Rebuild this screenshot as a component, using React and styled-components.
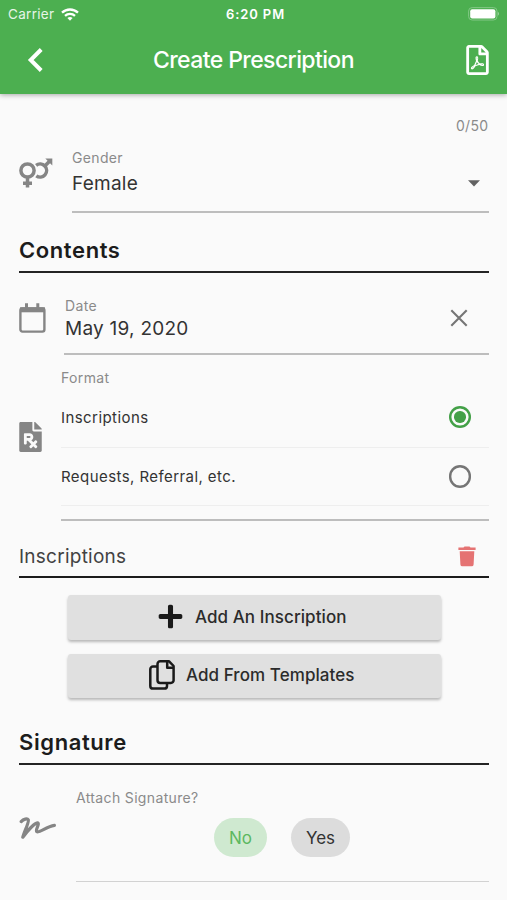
import { useState } from "react";
import styled, { createGlobalStyle } from "styled-components";
import { FaFilePrescription, FaPlus, FaRegFilePdf } from "react-icons/fa";

const GlobalStyle = createGlobalStyle`
  * {
    box-sizing: border-box;
  }

  body {
    margin: 0;
    background-color: #fafafa;
    font-family: Inter, "Liberation Sans", sans-serif;
    color: #333333;
  }

  button {
    font-family: inherit;
    border: none;
    padding: 0;
    cursor: pointer;
  }
`;

const Screen = styled.div`
  width: 507px;
  height: 900px;
  overflow: hidden;
  display: flex;
  flex-direction: column;
  background-color: #fafafa;
`;

const Header = styled.header`
  height: 94px;
  flex-shrink: 0;
  background-color: #4caf50;
  color: #ffffff;
  box-shadow: 0 1px 5px #00000055;
`;

const StatusBar = styled.div`
  height: 28px;
  padding: 0 8px 0 8px;
  display: grid;
  grid-template-columns: 1fr auto 1fr;
  align-items: center;
  font-size: 13.5px;
`;

const Carrier = styled.div`
  display: flex;
  align-items: center;
  gap: 7px;
  letter-spacing: 0.3px;
  color: #e6f5e7;
`;

const Clock = styled.div`
  padding-left: 4px;
  font-weight: 600;
  font-size: 13px;
  letter-spacing: 0.9px;
`;

const Battery = styled.div`
  display: flex;
  justify-content: flex-end;
`;

const NavBar = styled.div`
  height: 64px;
  padding: 0 18px 0 27px;
  display: grid;
  grid-template-columns: 126px 1fr auto;
  align-items: center;
`;

const Title = styled.h1`
  margin: 0;
  font-size: 23px;
  line-height: 28px;
  font-weight: 500;
  letter-spacing: -0.6px;
`;

const IconButton = styled.button`
  display: flex;
  background: none;
  color: inherit;
`;

const Form = styled.main`
  padding: 0 18.5px 0 19px;
  display: flex;
  flex-direction: column;
`;

const Counter = styled.div`
  height: 50px;
  padding-top: 23px;
  font-size: 14px;
  line-height: 17px;
  letter-spacing: 0.35px;
  text-align: right;
  color: #8a8a8a;
`;

const FieldRow = styled.div`
  height: ${(props) => props.$height}px;
  display: grid;
  grid-template-columns: ${(props) => props.$indent}px 1fr;
`;

const FieldIcon = styled.div`
  padding-top: ${(props) => props.$top}px;
  color: #858585;

  & > svg {
    display: block;
  }
`;

const Field = styled.div`
  display: flex;
  flex-direction: column;
  border-bottom: ${(props) => (props.$thin ? "1.5px solid #d2d2d2" : "2px solid #bdbdbd")};
`;

const Label = styled.div`
  margin-top: ${(props) => props.$top}px;
  font-size: 14px;
  line-height: 18px;
  letter-spacing: 0.35px;
  color: #8a8a8a;
`;

const ValueRow = styled.div`
  height: ${(props) => props.$height}px;
  padding-top: ${(props) => props.$top || 0}px;
  padding-right: ${(props) => props.$right}px;
  display: flex;
  align-items: center;
  justify-content: space-between;
`;

const Value = styled.div`
  font-size: 19px;
  line-height: 23px;
  letter-spacing: 0.25px;
  color: #333333;
`;

const DateText = styled.div`
  padding-left: 1px;
  display: flex;
  flex-direction: column;
  gap: 2px;
`;

const Heading = styled.h2`
  height: ${(props) => props.$height}px;
  margin: 0;
  padding-bottom: 7px;
  display: flex;
  align-items: flex-end;
  border-bottom: 2px solid #242424;
  font-size: 22px;
  line-height: 28px;
  font-weight: 600;
  letter-spacing: 0.6px;
  color: #1c1c1c;
`;

const SubHeading = styled.div`
  height: 57px;
  padding: 15px 13px 0 0;
  display: flex;
  align-items: center;
  justify-content: space-between;
  border-bottom: 2px solid #1c1c1c;
  font-size: 19px;
  letter-spacing: 0.25px;
  color: #424242;
`;

const Option = styled.button`
  height: ${(props) => props.$height}px;
  padding: 0 17.5px 0 0;
  display: flex;
  align-items: center;
  justify-content: space-between;
  background: none;
  border-bottom: 1px solid #eeeeee;
  font-size: 15px;
  letter-spacing: 0.43px;
  text-align: left;
  color: #333333;
`;

const Radio = styled.span`
  width: 22.5px;
  height: 22.5px;
  display: flex;
  align-items: center;
  justify-content: center;
  border-radius: 50%;
  box-shadow: inset 0 0 0 2.4px ${(props) => (props.$checked ? "#43a047" : "#757575")};

  &::after {
    content: "";
    width: 11.5px;
    height: 11.5px;
    border-radius: 50%;
    background-color: ${(props) => (props.$checked ? "#43a047" : "transparent")};
  }
`;

const Actions = styled.div`
  padding: 17px 47.5px 0 48.5px;
  display: flex;
  flex-direction: column;
  gap: 14px;
`;

const ActionButton = styled.button`
  height: 44.5px;
  padding: 0 5px 1px 0;
  display: flex;
  align-items: center;
  justify-content: center;
  gap: 11px;
  border-radius: 3px;
  background-color: #e0e0e0;
  box-shadow: 0 2px 3px #00000045;
  font-size: 17px;
  font-weight: 500;
  letter-spacing: 0.08px;
  color: #2b2b2b;

  & > svg {
    color: #1a1a1a;
  }
`;

const Chips = styled.div`
  margin-top: 11px;
  padding-left: 138px;
  display: flex;
  gap: 24px;
`;

const Chip = styled.button`
  width: ${(props) => props.$width}px;
  height: 39px;
  border-radius: 20px;
  background-color: ${(props) => (props.$selected ? "#cfe9d0" : "#dcdcdc")};
  color: ${(props) => (props.$selected ? "#5cb860" : "#333333")};
  font-size: 17px;
`;

const WifiIcon = () => (
  <svg width="18" height="13" viewBox="0 0 18 13" fill="none" stroke="#fff" strokeWidth="2.3">
    <path d="M1 4.7C5.5.4 12.5.4 17 4.7" />
    <path d="M4 7.8c2.8-2.6 7.2-2.6 10 0" />
    <path d="M6.4 10.1a3.8 3.8 0 0 1 5.2 0L9 12.7z" fill="#fff" stroke="none" />
  </svg>
);

const BatteryIcon = () => (
  <svg width="31" height="14" viewBox="0 0 31 14">
    <rect x=".6" y=".6" width="28.4" height="12.4" rx="3.5" fill="none" stroke="#82c785" />
    <rect x="2.2" y="2.2" width="25.2" height="9.4" rx="2" fill="#fff" />
    <path d="M29.8 4.8c1.4.8 1.4 3.2 0 4z" fill="#a5d7a7" />
  </svg>
);

const BackIcon = () => (
  <svg width="18" height="26" viewBox="0 0 18 26" fill="none" stroke="currentColor" strokeWidth="4">
    <path d="M14.2 2.5 3.7 13l10.5 10.5" />
  </svg>
);

const GenderIcon = () => (
  <svg width="34" height="31" viewBox="0 0 34 31" fill="none" stroke="currentColor" strokeWidth="3.5">
    <circle cx="8.5" cy="12.5" r="6.6" />
    <path d="M8.5 19v10.5M4 25.2h9" />
    <path d="M17.1 7.4A6.5 6.5 0 1 1 17.3 17.8" />
    <path d="m26.3 7.4 4-4" />
    <path d="M26.3.5h7v7z" fill="currentColor" stroke="none" />
  </svg>
);

const CalendarIcon = () => (
  <svg width="27" height="31" viewBox="0 0 27 31" fill="none" stroke="currentColor">
    <rect x="1.4" y="5.4" width="24" height="23.2" rx="2" strokeWidth="2.4" />
    <path d="M1 6.8h25" strokeWidth="5" />
    <path d="M7.5.3v6M18.8.3v6" strokeWidth="3" />
  </svg>
);

const ClearIcon = () => (
  <svg width="18" height="18" viewBox="0 0 18 18" fill="none" stroke="#757575" strokeWidth="2.1">
    <path d="m1.3 1.3 15.4 15.4M16.7 1.3 1.3 16.7" />
  </svg>
);

const ArrowIcon = () => (
  <svg width="12" height="7" viewBox="0 0 12 7">
    <path d="M0 .3h12L6 6.5z" fill="#616161" />
  </svg>
);

const TrashIcon = () => (
  <svg width="18" height="21" viewBox="0 0 18 21" fill="#e57373">
    <path d="M.4 1.5H5.5L6.5.4h5l1 1.1h5.1v2.6H.4z" />
    <path d="M1.7 5.3h14.6l-.7 13.1a2 2 0 0 1-2 1.9H4.4a2 2 0 0 1-2-1.9z" />
  </svg>
);

const CopyIcon = () => (
  <svg width="26" height="30" viewBox="0 0 26 30" fill="none" stroke="currentColor" strokeWidth="2.5" strokeLinejoin="round">
    <path d="M8.3 6.5H4A2.7 2.7 0 0 0 1.3 9.2v16.7A2.7 2.7 0 0 0 4 28.6h11.3a2.7 2.7 0 0 0 2.7-2.7v-2.8" />
    <path d="M11.2 1.3h8.9l4.5 4.7v14.2a2.7 2.7 0 0 1-2.7 2.7H11.2a2.7 2.7 0 0 1-2.7-2.7V4a2.7 2.7 0 0 1 2.7-2.7z" />
    <path d="M18.2 1.8v6h6" />
  </svg>
);

const SignatureIcon = () => (
  <svg width="38" height="26" viewBox="0 0 38 26" fill="none" stroke="currentColor" strokeWidth="3.2" strokeLinecap="round" strokeLinejoin="round">
    <path d="M2.2 6.6C4.5 4 8.3 3.2 9.3 4.8c1 2.2-3.8 11.2-5.5 17.4C8 16.5 15.2 8.4 18.4 7.9c3 .2-2.6 7.3-.6 8.8 2.8 1.6 9.5-5.3 17.6-6.3" />
  </svg>
);

const FORMATS = [
  { name: "Inscriptions", height: 61 },
  { name: "Requests, Referral, etc.", height: 58 },
];

export default function App() {
  const [format, setFormat] = useState("Inscriptions");
  const [attach, setAttach] = useState(false);

  return (
    <>
      <GlobalStyle />
      <Screen>
        <Header>
          <StatusBar>
            <Carrier>
              Carrier
              <WifiIcon />
            </Carrier>
            <Clock>6:20 PM</Clock>
            <Battery>
              <BatteryIcon />
            </Battery>
          </StatusBar>
          <NavBar>
            <IconButton aria-label="Back">
              <BackIcon />
            </IconButton>
            <Title>Create Prescription</Title>
            <IconButton aria-label="PDF">
              <FaRegFilePdf size={30} style={{ width: 23 }} />
            </IconButton>
          </NavBar>
        </Header>

        <Form>
          <Counter>0/50</Counter>

          <FieldRow $height={69} $indent={53}>
            <FieldIcon $top={14}>
              <GenderIcon />
            </FieldIcon>
            <Field>
              <Label $top={5}>Gender</Label>
              <ValueRow $height={33} $right={9}>
                <Value>Female</Value>
                <ArrowIcon />
              </ValueRow>
            </Field>
          </FieldRow>

          <Heading $height={60}>Contents</Heading>

          <FieldRow $height={82} $indent={45}>
            <FieldIcon $top={30}>
              <CalendarIcon />
            </FieldIcon>
            <Field>
              <ValueRow $height={80} $top={10} $right={20.5}>
                <DateText>
                  <Label>Date</Label>
                  <Value>May 19, 2020</Value>
                </DateText>
                <ClearIcon />
              </ValueRow>
            </Field>
          </FieldRow>

          <FieldRow $height={166} $indent={42}>
            <FieldIcon $top={67}>
              <FaFilePrescription size={30} style={{ width: 23 }} />
            </FieldIcon>
            <Field>
              <Label $top={14}>Format</Label>
              {FORMATS.map((item) => (
                <Option
                  key={item.name}
                  $height={item.height}
                  onClick={() => setFormat(item.name)}
                >
                  {item.name}
                  <Radio $checked={format === item.name} />
                </Option>
              ))}
            </Field>
          </FieldRow>

          <SubHeading>
            Inscriptions
            <TrashIcon />
          </SubHeading>

          <Actions>
            <ActionButton>
              <FaPlus size={27} />
              Add An Inscription
            </ActionButton>
            <ActionButton>
              <CopyIcon />
              Add From Templates
            </ActionButton>
          </Actions>

          <Heading $height={67}>Signature</Heading>

          <FieldRow $height={117} $indent={57}>
            <FieldIcon $top={50}>
              <SignatureIcon />
            </FieldIcon>
            <Field $thin>
              <Label $top={24}>Attach Signature?</Label>
              <Chips>
                <Chip $width={53} $selected={!attach} onClick={() => setAttach(false)}>
                  No
                </Chip>
                <Chip $width={59} $selected={attach} onClick={() => setAttach(true)}>
                  Yes
                </Chip>
              </Chips>
            </Field>
          </FieldRow>
        </Form>
      </Screen>
    </>
  );
}
